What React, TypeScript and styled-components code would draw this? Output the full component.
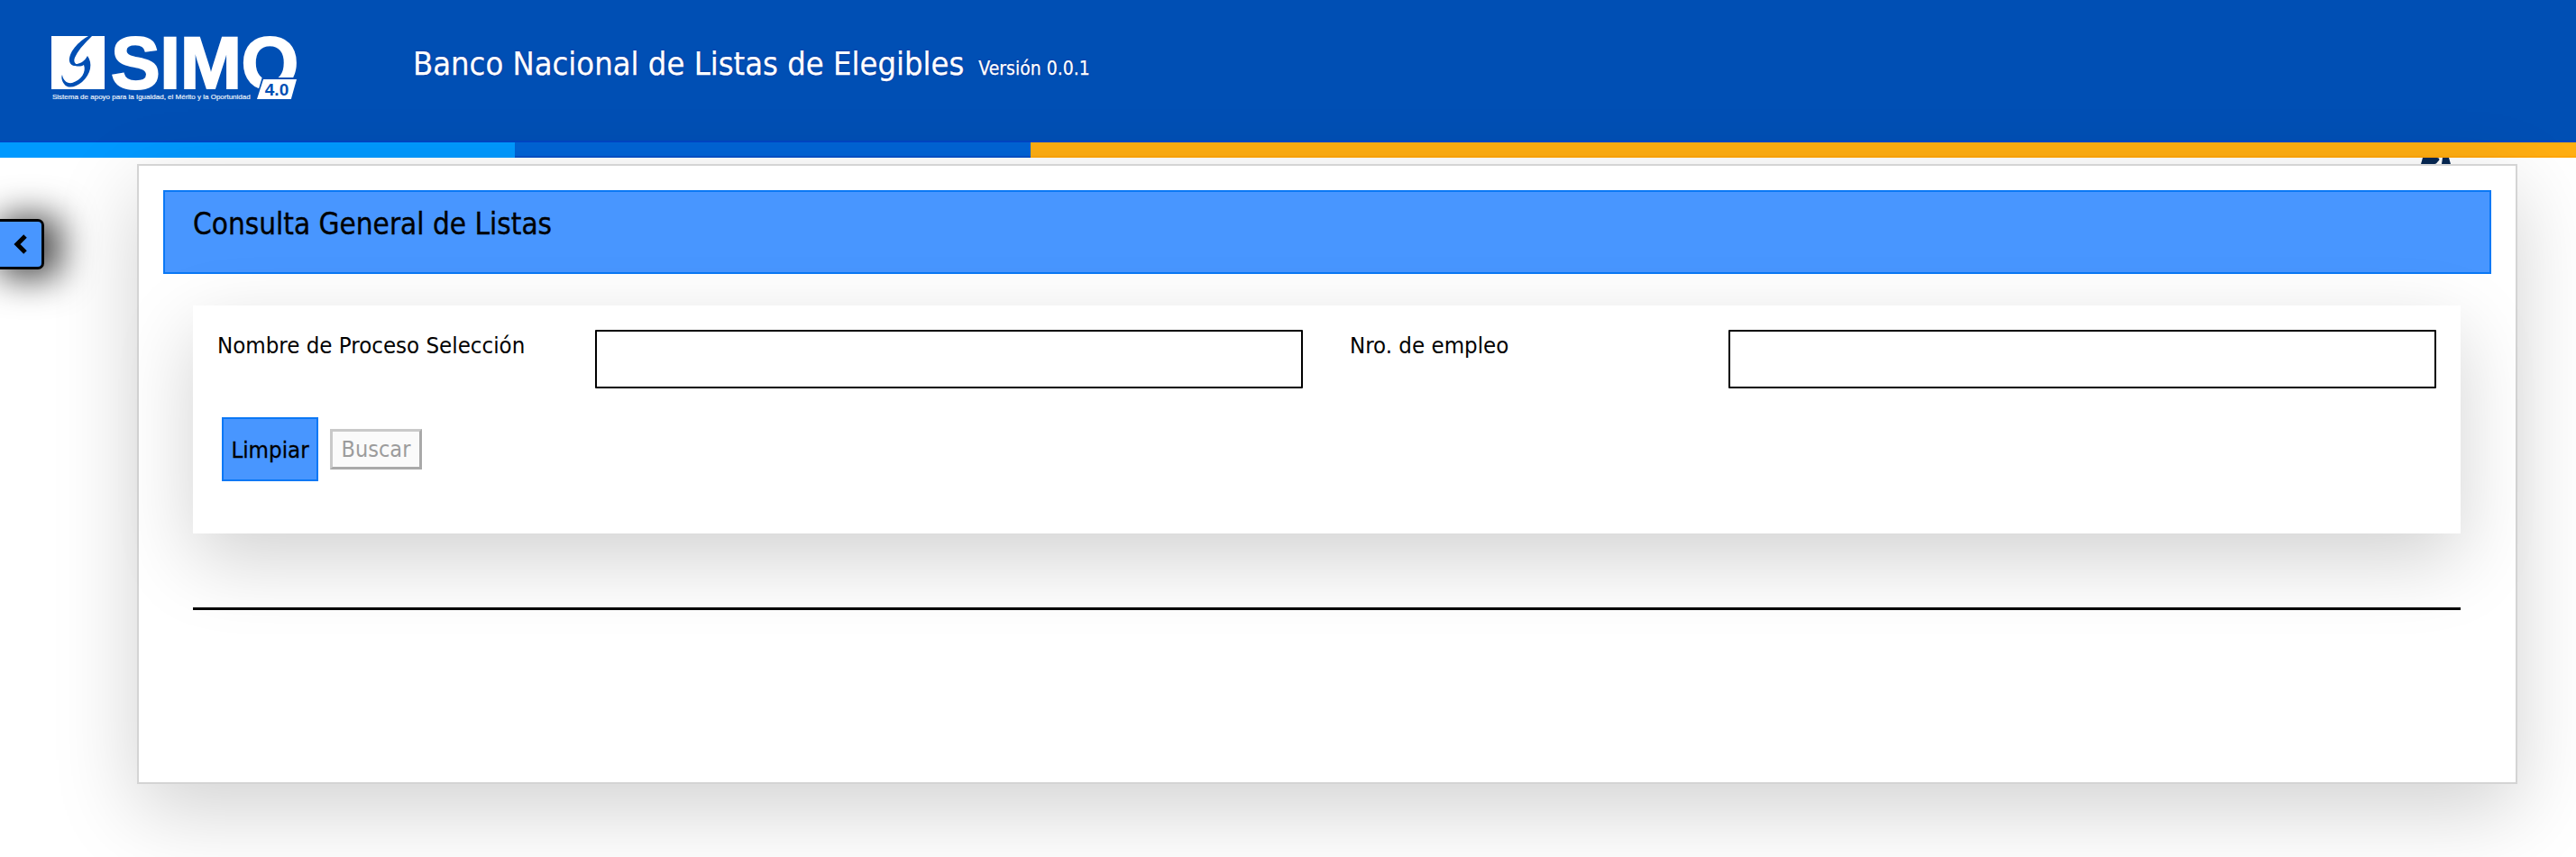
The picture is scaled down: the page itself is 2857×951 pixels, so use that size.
import React from "react";
import styled, { createGlobalStyle } from "styled-components";

const Global = createGlobalStyle`
  html, body { margin: 0; padding: 0; background: #fff; }
  body { font-family: "DejaVu Sans Condensed", "DejaVu Sans", sans-serif; overflow: hidden; }
`;

const Page = styled.div`
  position: relative;
  width: 2857px;
  height: 951px;
  overflow: hidden;
  background: #fff;
`;

const Header = styled.header`
  height: 156px;
  background: #004fb4;
  border-bottom: 2px solid #0046c4;
  display: flex;
  align-items: flex-start;
`;

const Logo = styled.div`
  width: 400px;
  margin-left: 57px;
  margin-top: 40px;
  position: relative;
  flex: none;
`;

const LogoTop = styled.div`
  display: flex;
  gap: 7px;
  align-items: flex-start;
`;

const LogoMark = styled.svg`
  width: 59px;
  height: 59px;
  display: block;
  flex: none;
`;

const LogoWord = styled.span`
  font-family: "Liberation Sans", Arial, sans-serif;
  font-weight: 700;
  font-size: 82px;
  line-height: 59px;
  height: 59px;
  letter-spacing: -0.4px;
  color: #fff;
  -webkit-text-stroke: 2px #fff;
`;

const LogoTagline = styled.div`
  font-family: "Liberation Sans", Arial, sans-serif;
  font-size: 8px;
  line-height: 10px;
  margin-top: 4px;
  margin-left: 1px;
  color: #e6eef9;
  white-space: nowrap;
  -webkit-text-stroke: 0.2px #e6eef9;
`;

const BadgeFrame = styled.div`
  position: absolute;
  left: 226px;
  top: 46px;
  width: 48px;
  height: 26px;
  padding: 2px;
  box-sizing: border-box;
  background: #004fb4;
  clip-path: polygon(16% 0, 100% 0, 86% 100%, 0 100%);
`;

const VersionBadge = styled.div`
  width: 44px;
  height: 22px;
  background: #fff;
  clip-path: polygon(16% 0, 100% 0, 86% 100%, 0 100%);
  color: #004fb4;
  font-family: "Liberation Sans", Arial, sans-serif;
  font-weight: 700;
  font-size: 19px;
  line-height: 24px;
  text-align: center;
`;

const TitleRow = styled.div`
  margin-left: 1px;
  margin-top: 49px;
  display: flex;
  align-items: baseline;
  gap: 16px;
  color: #fff;
  white-space: nowrap;
  text-shadow: 0 0 2px #00208c;
`;

const AppTitle = styled.span`
  font-size: 36px;
  line-height: 44px;
  -webkit-text-stroke: 0.25px #fff;
`;

const AppVersion = styled.span`
  font-size: 21px;
  line-height: 24px;
  -webkit-text-stroke: 0.25px #fff;
`;

const Stripe = styled.div`
  display: flex;
  height: 17px;
`;

const StripePart = styled.div<{ $w?: string; $bg: string; $edge: string }>`
  box-sizing: border-box;
  width: ${(p) => p.$w ?? "auto"};
  flex: ${(p) => (p.$w ? "none" : "1")};
  background: ${(p) => p.$bg};
  border-bottom: 2px solid ${(p) => p.$edge};
`;

const Peek = styled.svg`
  position: absolute;
  left: 2683px;
  top: 175px;
  width: 36px;
  height: 7px;
  z-index: 2;
`;

const Main = styled.main`
  padding: 7px 65px 0 152px;
`;

const Card = styled.section`
  position: relative;
  box-sizing: border-box;
  width: 2640px;
  height: 688px;
  background: #fff;
  border: 2px solid #d4d4d4;
  padding: 27px 27px 0 27px;
  box-shadow: 0 29px 86px rgba(0, 0, 0, 0.18);
`;

const Banner = styled.div`
  box-sizing: border-box;
  height: 93px;
  background: #4896ff;
  border: 2px solid #0a78f5;
  padding: 16px 31px;
  color: #000;
  font-size: 33px;
  line-height: 40px;
  -webkit-text-stroke: 0.35px #000;
`;

const Panel = styled.div`
  box-sizing: border-box;
  margin: 35px 34px 0 33px;
  height: 253px;
  background: #fff;
  padding: 27px 27px 0 27px;
  box-shadow: 0 29px 86px rgba(0, 0, 0, 0.18);
`;

const Fields = styled.div`
  display: grid;
  grid-template-columns: 419px 785px 472px 785px;
`;

const Label = styled.label<{ $gap?: number }>`
  font-size: 25.6px;
  line-height: 34px;
  color: #000;
  padding-left: ${(p) => p.$gap ?? 0}px;
`;

const TextInput = styled.input`
  box-sizing: border-box;
  width: 785px;
  height: 65px;
  border: 2px solid #000;
  background: #fff;
  display: block;
  padding: 0;
  border-radius: 1px;
`;

const Actions = styled.div`
  display: flex;
  align-items: center;
  gap: 13px;
  margin-top: 32px;
  margin-left: 5px;
`;

const PrimaryButton = styled.button`
  box-sizing: border-box;
  width: 107px;
  height: 71px;
  background: #4896ff;
  border: 2px solid #0a78f5;
  color: #000;
  font-family: inherit;
  font-size: 25.6px;
  padding: 0;
  -webkit-text-stroke: 0.3px #000;
`;

const DisabledButton = styled.button`
  box-sizing: border-box;
  width: 102px;
  height: 45px;
  background: #fafafa;
  border: 3px solid #a9a9a9;
  border-top-color: #c9c9c9;
  border-left-color: #c9c9c9;
  color: #9c9c9c;
  font-family: inherit;
  font-size: 25px;
  padding: 0;
`;

const Rule = styled.hr`
  margin: 82px 34px 0 33px;
  border: 0;
  height: 3px;
  background: #000;
`;

const SideToggle = styled.button`
  position: absolute;
  left: -8px;
  top: 243px;
  width: 57px;
  height: 56px;
  box-sizing: border-box;
  background: #4896ff;
  border: 3px solid #000;
  border-radius: 7px;
  box-shadow: 12px 3px 38px 7px rgba(0, 0, 0, 0.7);
  padding: 0 0 0 5px;
  display: flex;
  align-items: center;
  justify-content: center;
`;

const Chevron = styled.svg`
  width: 17px;
  height: 24px;
  display: block;
`;

export default function App() {
  return (
    <Page>
      <Global />
      <Header>
        <Logo>
          <LogoTop>
            <LogoMark viewBox="0 0 59 59">
              <rect width="59" height="59" fill="#fff" />
              <path
                fill="#004fb4"
                d="M45 0H41C30 6 19 18 20 28C21 33 26 34 30 32C25 31 24 27 27 22C31 14 38 7 45 0Z"
              />
              <path
                fill="#004fb4"
                d="M24 32C32 31 37 28 40 22C46 30 44 42 34 51C27 57 18 59 14 53C11 49 11 45 12 43C13 49 17 53 23 52C33 49 39 40 36 32C33 34 28 34 24 32Z"
              />
            </LogoMark>
            <LogoWord>SIMO</LogoWord>
          </LogoTop>
          <LogoTagline>Sistema de apoyo para la Igualdad, el Mérito y la Oportunidad</LogoTagline>
          <BadgeFrame>
            <VersionBadge>4.0</VersionBadge>
          </BadgeFrame>
        </Logo>
        <TitleRow>
          <AppTitle>Banco Nacional de Listas de Elegibles</AppTitle>
          <AppVersion>Versión 0.0.1</AppVersion>
        </TitleRow>
      </Header>
      <Stripe>
        <StripePart $w="571px" $bg="#0099ff" $edge="#0099ff" />
        <StripePart $w="572px" $bg="#0064d6" $edge="#0050c8" />
        <StripePart $bg="#ffae12" $edge="#ffa60a" />
      </Stripe>
      <Peek viewBox="0 0 36 7">
        <path fill="#06264f" d="M2 7L4 0H20C23 0 23 3 21 4C20 5 19 7 17 7ZM26 0H33L35 7H25Z" />
      </Peek>
      <Main>
        <Card>
          <Banner>Consulta General de Listas</Banner>
          <Panel>
            <Fields>
              <Label>Nombre de Proceso Selección</Label>
              <TextInput aria-label="Nombre de Proceso Selección" />
              <Label $gap={52}>Nro. de empleo</Label>
              <TextInput aria-label="Nro. de empleo" />
            </Fields>
            <Actions>
              <PrimaryButton>Limpiar</PrimaryButton>
              <DisabledButton disabled>Buscar</DisabledButton>
            </Actions>
          </Panel>
          <Rule />
        </Card>
      </Main>
      <SideToggle aria-label="Contraer">
        <Chevron viewBox="0 0 17 24">
          <path d="M13 3L4 12L13 21" fill="none" stroke="#000" strokeWidth="5" />
        </Chevron>
      </SideToggle>
    </Page>
  );
}
